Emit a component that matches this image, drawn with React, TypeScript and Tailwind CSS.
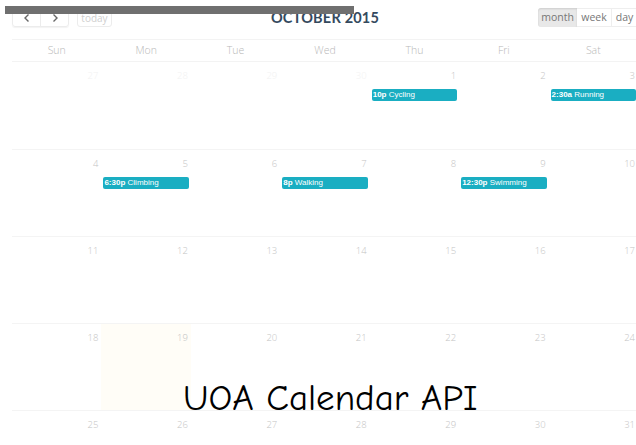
import React from "react";

type Ev = { time: string; title: string };

const days = ["Sun", "Mon", "Tue", "Wed", "Thu", "Fri", "Sat"];

const weeks: { n: number; other?: boolean; today?: boolean; ev?: Ev }[][] = [
  [
    { n: 27, other: true },
    { n: 28, other: true },
    { n: 29, other: true },
    { n: 30, other: true },
    { n: 1, ev: { time: "10p", title: "Cycling" } },
    { n: 2 },
    { n: 3, ev: { time: "2:30a", title: "Running" } },
  ],
  [
    { n: 4 },
    { n: 5, ev: { time: "6:30p", title: "Climbing" } },
    { n: 6 },
    { n: 7, ev: { time: "8p", title: "Walking" } },
    { n: 8 },
    { n: 9, ev: { time: "12:30p", title: "Swimming" } },
    { n: 10 },
  ],
  [{ n: 11 }, { n: 12 }, { n: 13 }, { n: 14 }, { n: 15 }, { n: 16 }, { n: 17 }],
  [{ n: 18 }, { n: 19, today: true }, { n: 20 }, { n: 21 }, { n: 22 }, { n: 23 }, { n: 24 }],
  [{ n: 25 }, { n: 26 }, { n: 27 }, { n: 28 }, { n: 29 }, { n: 30 }, { n: 31 }],
];

const light = { fontFamily: "'Open Sans', 'Liberation Sans', sans-serif" };

export default function App() {
  return (
    <div className="relative w-[636px] h-[445px] overflow-hidden bg-white">
      <div className="w-[626px] ml-[12px]">
        {/* toolbar */}
        <div className="grid grid-cols-[1fr_auto_1fr] items-start h-[39px] pt-[8px]">
          <div className="flex gap-[8px]">
            <div className="flex h-[19px] border border-[#ececec] rounded-[3px] shadow-[0_1px_1px_rgba(0,0,0,0.05)]">
              <button className="w-[28px] flex items-center justify-center border-r border-[#ececec] text-[#666]">
                <svg width="8" height="10" viewBox="0 0 8 10" fill="none" stroke="#666" strokeWidth="1.4">
                  <path d="M5.5 1.5 L2 5 L5.5 8.5" />
                </svg>
              </button>
              <button className="w-[27px] flex items-center justify-center text-[#666]">
                <svg width="8" height="10" viewBox="0 0 8 10" fill="none" stroke="#666" strokeWidth="1.4">
                  <path d="M2.5 1.5 L6 5 L2.5 8.5" />
                </svg>
              </button>
            </div>
            <button
              className="h-[19px] w-[35px] border border-[#ececec] rounded-[3px] text-[10px] text-[#cfcfcf] leading-none"
              style={light}
            >
              today
            </button>
          </div>
          <div
            className="text-[14.5px] font-bold text-[#34495e] leading-[18px] tracking-[0.2px] pt-[1px]"
            style={{ fontFamily: "Lato, 'Liberation Sans', sans-serif" }}
          >
            OCTOBER 2015
          </div>
          <div className="flex justify-end pr-0">
            <div className="flex h-[19px] text-[10.5px] text-[#777] leading-none" style={light}>
              <div className="w-[39px] flex items-center justify-center bg-[#e8e8e8] rounded-l-[3px] shadow-[inset_0_1px_2px_rgba(0,0,0,0.12)]">
                month
              </div>
              <div className="w-[35px] flex items-center justify-center border-y border-r border-[#eeeeee]">
                week
              </div>
              <div className="w-[26px] flex items-center justify-center border-y border-r border-[#eeeeee]">
                day
              </div>
            </div>
          </div>
        </div>

        {/* day names */}
        <div className="grid grid-cols-7 h-[23px] border-t border-[#f3f3f3] border-b" style={light}>
          {days.map((d) => (
            <div key={d} className="flex items-center justify-center text-[10.5px] font-light text-[#b8b8b8] pt-[1px]">
              {d}
            </div>
          ))}
        </div>

        {/* weeks */}
        {weeks.map((w, wi) => (
          <div key={wi} className={`grid grid-cols-7 h-[87px] ${wi > 0 ? "border-t border-[#f4f4f4]" : ""}`}>
            {w.map((c, ci) => (
              <div key={ci} className={`flex flex-col ${c.today ? "bg-[#fffdf7]" : ""}`} style={light}>
                <div
                  className={`text-right pr-[3px] pt-[7px] h-[27px] text-[9.5px] font-light leading-[14px] ${
                    c.other ? "text-[#f2f2f2]" : "text-[#c4c4c4]"
                  }`}
                >
                  {c.n}
                </div>
                {c.ev && (
                  <div
                    className="mx-[2px] h-[12px] bg-[#1aaec2] rounded-[2px] text-white text-[8px] leading-[12px] pl-[1px] whitespace-nowrap overflow-hidden"
                    style={{ fontFamily: "'Liberation Sans', sans-serif" }}
                  >
                    <span className="font-bold">{c.ev.time}</span> {c.ev.title}
                  </div>
                )}
              </div>
            ))}
          </div>
        ))}
      </div>

      {/* grey strip across the top */}
      <div className="absolute left-[5px] top-[6px] w-[349px] h-[8px] bg-[#6f6f6f]" />

      {/* caption */}
      <div
        className="absolute left-[183px] top-[376px] text-[37px] leading-[44px] text-black whitespace-nowrap"
        style={{ fontFamily: "'Comic Sans MS', 'Comic Neue', 'Open Sans', sans-serif" }}
      >
        UOA Calendar API
      </div>
    </div>
  );
}
